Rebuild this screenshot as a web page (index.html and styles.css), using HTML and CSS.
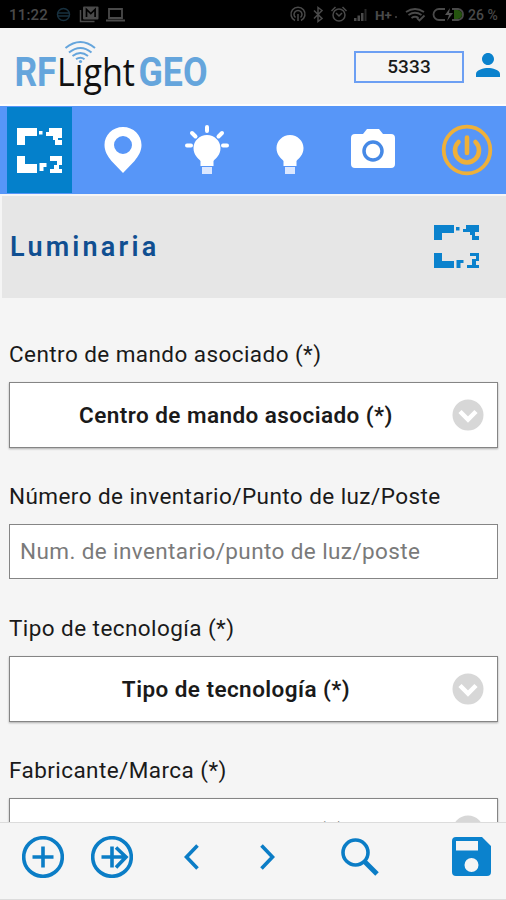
FILE: index.html
```html
<!DOCTYPE html>
<html lang="es">
<head>
    <meta charset="UTF-8">
    <meta name="viewport" content="width=device-width, initial-scale=1.0">
    <title>RFLight GEO</title>
    <link rel="stylesheet" href="styles.css">
</head>
<body>

    <div class="status-bar">
        <span class="clock">11:22</span>
        <svg class="status-left" width="72" height="28" viewBox="56 0 72 28">
            <g fill="none" stroke="#17303f" stroke-width="1.5">
                <circle cx="63.5" cy="14.500" r="6"/>
                <path d="M58 13h11M58 16h11"/>
            </g>
            <path d="M80.500 10v11.500h14" fill="none" stroke="#4a4a4a" stroke-width="1.500"/>
            <rect x="83" y="6.500" width="15.500" height="13" rx="1" fill="#4a4a4a"/>
            <path d="M86.500 17V9.500l4.300 4 4.300-4V17" fill="none" stroke="#000" stroke-width="1.700"/>
            <path d="M109 9h13v9h-13zM106 20.500h19" fill="none" stroke="#4a4a4a" stroke-width="1.800"/>
        </svg>
        <svg class="status-right" width="112" height="28" viewBox="288 0 112 28">
            <g fill="none" stroke="#4a4a4a" stroke-width="1.500">
                <path d="M295 20.500a7 7 0 1 1 6 0M295.500 17.500a4 4 0 1 1 5 0M298 14v7"/>
                <path d="M314 10.500l8 8-4 3V7.500l4 3-8 8"/>
                <circle cx="339" cy="15" r="6"/>
                <path d="M336 13l3 3 3-3M331.500 11l4-4M346.500 11l-4-4"/>
            </g>
            <path d="M354 21v-3h2.500v3zM357.500 21v-5.500h2.500V21zM361 21v-8h2.500v8z" fill="#4a4a4a"/>
            <path d="M364.500 21V9h2v12z" fill="#292929"/>
            <text class="network" x="375" y="20">H+</text>
            <path d="M395 16h2v2h-2z" fill="#333"/>
        </svg>
        <svg class="battery" width="66" height="28" viewBox="402 0 66 28">
            <g fill="none" stroke="#4a4a4a" stroke-width="1.800">
                <path d="M406 12q9-6 18 0M408.500 15q6.500-4.500 13 0M411.500 18q3.500-2.500 7 0M417 18l2.500 2.500 5-5"/>
                <path d="M445 9h-6a5.500 5.500 0 0 0 0 11h6M452 9h6q5 1 5 5.500t-5 5.500h-6"/>
            </g>
            <path d="M454 10h4q4 1 4 4.500t-4 4.500h-4z" fill="#25540f"/>
            <path d="M450 8l-5 7h4l-2 6 6-8h-4z" fill="#555"/>
        </svg>
        <span class="percent">26 %</span>
    </div>

    <header class="header">
        <svg class="logo" width="196" height="66" viewBox="14 36 196 66">
            <text class="logo-blue" x="14.500" y="87" textLength="42" lengthAdjust="spacingAndGlyphs">RF</text>
            <text class="logo-black" x="57" y="87" textLength="78" lengthAdjust="spacingAndGlyphs">Lıght</text>
            <text class="logo-blue" x="138.500" y="87" textLength="69" lengthAdjust="spacingAndGlyphs">GEO</text>
            <g fill="none" stroke="#65a5dc" stroke-width="2">
                <path d="M65.500 49q15-12 29.500 0M69 53.500q11.500-9 22.500 0M72.500 57q8-6 15.500 0M76 60.200q4.500-3 8.500 0"/>
            </g>
            <circle cx="80.500" cy="62.500" r="1.600" fill="#65a5dc"/>
        </svg>
        <div class="user-code">5333</div>
        <svg class="user-icon" width="24" height="24" viewBox="4 4 16 16">
            <path d="M12 12c2.200 0 4-1.800 4-4s-1.800-4-4-4-4 1.800-4 4 1.800 4 4 4zm0 2c-2.700 0-8 1.300-8 4v2h16v-2c0-2.700-5.300-4-8-4z"/>
        </svg>
    </header>

    <nav class="tabs">
        <div class="tab active">
            <svg width="45" height="45" viewBox="0 0 45 45" fill="#fff">
                <path d="M0 0h20v8H8v9H0zM22 3h3.500v3.500H22zM32 0h13v10h-4v2h4v5h-7v-5h-2V8h-7V4h3zM0 28h8v8h12v9H0zM22.500 35h7v4h-3v4h-4zM33 28h12v9h-3v4h3v4H33v-4h4v-4h3v-4h-7z"/>
            </svg>
        </div>
        <div class="tab">
            <svg width="38" height="48" viewBox="0 0 38 48">
                <path fill="#fff" fill-rule="evenodd" d="M19 1C8.500 1 .5 9 .5 19c0 6 3 11 7 16L19 47l11.500-12c4-5 7-10 7-16C37.500 9 29.500 1 19 1zm0 9a9 9 0 1 1 0 18 9 9 0 0 1 0-18z"/>
            </svg>
        </div>
        <div class="tab bulb">
            <svg width="46" height="52" viewBox="0 0 46 52">
                <path d="M23 4v4M8 10l3.500 3.500M38 10l-3.500 3.500M3 22.500h4M39 22.500h4" fill="none" stroke="#fff" stroke-width="4" stroke-linecap="round"/>
                <path d="M23 12c-7.500 0-13.500 6-13.500 13 0 7 4.500 10 7 13v5h13v-5c2.500-3 7-6 7-13 0-7-6-13-13.500-13z" fill="#fff"/>
                <path d="M18 44h10v7H18z" fill="#dbe7ff"/>
            </svg>
        </div>
        <div class="tab bulb">
            <svg width="46" height="52" viewBox="0 0 46 52">
                <path d="M23 12c-7.500 0-13.500 6-13.500 13 0 7 4.500 10 7 13v5h13v-5c2.500-3 7-6 7-13 0-7-6-13-13.500-13z" fill="#fff"/>
                <path d="M18 44h10v7H18z" fill="#dbe7ff"/>
            </svg>
        </div>
        <div class="tab camera">
            <svg width="44" height="40" viewBox="0 0 44 40">
                <path d="M4 5h8l4-5h12l4 5h8q4 0 4 4v26q0 4-4 4H4q-4 0-4-4V9q0-4 4-4z" fill="#fff"/>
                <circle cx="22" cy="22" r="9" fill="#fff" stroke="#4689e6" stroke-width="3.500"/>
            </svg>
        </div>
        <div class="tab power">
            <svg width="52" height="52" viewBox="0 0 52 52" fill="none" stroke="#eeb03a" stroke-linecap="round">
                <circle cx="26" cy="26" r="23.300" stroke-width="3.800"/>
                <path d="M17.500 18a12 12 0 1 0 17 0M26 13.500V29" stroke-width="4.600"/>
            </svg>
        </div>
    </nav>

    <div class="title-bar">
        <h1>Luminaria</h1>
        <svg width="45" height="45" viewBox="0 0 45 45" fill="#0b82cd">
            <path d="M0 0h20v8H8v7H0zM22 2h3.500v3.500H22zM32 0h13v7h-4v4h4v4h-7v-5h-2V7h-7V4h3zM0 28h8v8h12v7H0zM22.500 35h7v3h-3v5h-4zM36 28h9v8h-3v4h3v3H33v-3h5v-6h4v-3h-6z"/>
        </svg>
    </div>

    <main class="form">
        <label class="label">Centro de mando asociado (*)</label>
        <div class="select">
            <span>Centro de mando asociado (*)</span>
            <svg class="arrow" width="32" height="32" viewBox="0 0 32 32"><circle cx="16" cy="16" r="15.500"/><path d="M8 12.500l8 8 8-8"/></svg>
        </div>

        <label class="label">Número de inventario/Punto de luz/Poste</label>
        <input class="input" type="text" placeholder="Num. de inventario/punto de luz/poste">

        <label class="label">Tipo de tecnología (*)</label>
        <div class="select">
            <span>Tipo de tecnología (*)</span>
            <svg class="arrow" width="32" height="32" viewBox="0 0 32 32"><circle cx="16" cy="16" r="15.500"/><path d="M8 12.500l8 8 8-8"/></svg>
        </div>

        <label class="label">Fabricante/Marca (*)</label>
        <div class="select">
            <span>Fabricante/Marca (*)</span>
            <svg class="arrow" width="32" height="32" viewBox="0 0 32 32"><circle cx="16" cy="16" r="15.500"/><path d="M8 12.500l8 8 8-8"/></svg>
        </div>
    </main>

    <footer class="toolbar">
        <svg class="tool-add" width="42" height="42" viewBox="0 0 42 42">
            <circle cx="21" cy="21" r="19.300"/><path d="M21 10.500v21M10.500 21h21"/>
        </svg>
        <svg class="tool-copy" width="42" height="42" viewBox="0 0 42 42">
            <circle cx="21" cy="21" r="19.300"/><path d="M21 10.500v21M10.500 21H35M25 11.500l10 9.500-10 10.500"/>
        </svg>
        <svg class="tool-prev" width="15" height="26" viewBox="0 0 15 26"><path d="M13.500 1.500L2.500 13l11 11.500"/></svg>
        <svg class="tool-next" width="15" height="26" viewBox="0 0 15 26"><path d="M1.500 1.500L12.500 13l-11 11.500"/></svg>
        <svg class="tool-search" width="38" height="38" viewBox="0 0 38 38">
            <circle cx="14.500" cy="14.500" r="12.500"/><path class="handle" d="M23 23l13 13"/>
        </svg>
        <svg class="tool-save" width="39" height="39" viewBox="0 0 39 39">
            <path d="M4 0h26l9 9v26q0 4-4 4H4q-4 0-4-4V4q0-4 4-4zm0 4v9.500h22V4zm15.500 17a7 7 0 1 0 0 14 7 7 0 0 0 0-14z"/>
        </svg>
    </footer>

</body>
</html>
```
FILE: styles.css
```css
* {
    box-sizing: border-box;
}
body {
    margin: 0;
    height: 900px;
    display: flex;
    flex-direction: column;
    overflow: hidden;
    font-family: Roboto, "Liberation Sans", sans-serif;
    background: #f5f5f5;
    color: #1a1a1a;
}
svg {
    display: block;
    flex: none;
}

/* phone status bar */
.status-bar {
    flex: none;
    display: flex;
    align-items: center;
    height: 28px;
    padding: 0 8px 0 9px;
    background: #000;
    color: #4a4a4a;
    font-size: 15px;
    font-weight: 500;
}
.clock {
    width: 47px;
    padding-top: 2px;
    letter-spacing: 0.2px;
}
.status-right {
    margin-left: auto;
}
.network {
    font-size: 13.5px;
    font-weight: 700;
    fill: #4a4a4a;
}
.battery {
    margin-left: 2px;
}
.percent {
    width: 30px;
    padding-top: 2px;
    font-size: 14px;
    white-space: nowrap;
}

/* logo and user */
.header {
    flex: none;
    display: flex;
    align-items: center;
    height: 78px;
    padding: 0 6px 0 14px;
    border-bottom: 2px solid #fdfdfd;
}
.logo {
    margin-top: 4px;
}
.logo-blue {
    font-size: 40px;
    font-weight: 700;
    fill: #65a5dc;
}
.logo-black {
    font-family: "Open Sans", sans-serif;
    font-size: 38px;
    font-weight: 400;
    fill: #111;
}
.user-code {
    width: 110px;
    height: 32px;
    margin: 2px 0 0 auto;
    border: 2px solid #6c9ff3;
    font-size: 19px;
    font-weight: 500;
    line-height: 28px;
    text-align: center;
    letter-spacing: 0.1px;
}
.user-icon {
    margin: -2px 0 0 12px;
    fill: #0b82cd;
}

/* top tabs */
.tabs {
    flex: none;
    display: flex;
    gap: 18px;
    height: 88px;
    padding: 1px 13px 1px 7px;
    background: #5796f8;
}
.tab {
    flex: none;
    width: 65px;
    display: flex;
    align-items: center;
    justify-content: center;
}
.tab.active {
    background: #0480cb;
}
.bulb {
    padding: 0 0 2px 2px;
}
.camera {
    padding: 0 0 3px 2px;
}
.tab.power {
    width: 52px;
    margin-left: auto;
}

.title-bar {
    flex: none;
    display: flex;
    align-items: center;
    justify-content: space-between;
    height: 102px;
    margin: 2px 0 0 2px;
    padding: 0 27px 0 8px;
    background: #e6e6e6;
}
.title-bar h1 {
    margin: 0;
    font-size: 27px;
    font-weight: 600;
    letter-spacing: 3.2px;
    color: #104f91;
}

/* form fields */
.form {
    flex: 1;
    min-height: 0;
    overflow: hidden;
    padding: 40px 8px 0 9px;
}
.label {
    display: block;
    height: 32px;
    margin-bottom: 12px;
    font-size: 22.5px;
    line-height: 32px;
    letter-spacing: 0.43px;
}
.select {
    display: flex;
    align-items: center;
    height: 66px;
    margin-bottom: 32px;
    padding: 0 13px;
    border: 1px solid #858585;
    box-shadow: 0 1px 2px rgba(0, 0, 0, 0.3);
    background: #fff;
}
.select span {
    flex: 1;
    padding: 0 3px 1px 0;
    font-size: 22.5px;
    font-weight: 600;
    text-align: center;
    letter-spacing: 0.44px;
}
.arrow circle {
    fill: #d7d7d7;
}
.arrow path {
    fill: none;
    stroke: #fff;
    stroke-width: 4.5;
}
.input {
    display: block;
    width: 100%;
    height: 55px;
    margin-bottom: 33px;
    padding: 0 10px 2px;
    border: 1px solid #858585;
    background: #fff;
    font-family: inherit;
    font-size: 22.5px;
    letter-spacing: 0.4px;
}
.input::placeholder {
    color: #7a7a7a;
}

/* bottom actions */
.toolbar {
    flex: none;
    display: flex;
    align-items: center;
    height: 78px;
    padding: 0 15px 9px 22px;
    border-top: 1px solid #dcdcdc;
    border-bottom: 1px solid #dcdcdc;
    background: #f5f5f5;
}
.toolbar svg {
    fill: none;
    stroke: #0b7dc6;
    stroke-width: 3.6;
}
.tool-copy {
    margin-left: 27px;
}
.tool-prev {
    margin-left: 51px;
}
.tool-next {
    margin-left: 61px;
}
.tool-search {
    margin-left: 66px;
}
.toolbar .handle {
    stroke-width: 5;
}
.toolbar .tool-save {
    margin-left: auto;
    fill: #0b82cd;
    fill-rule: evenodd;
    stroke: none;
}
```
